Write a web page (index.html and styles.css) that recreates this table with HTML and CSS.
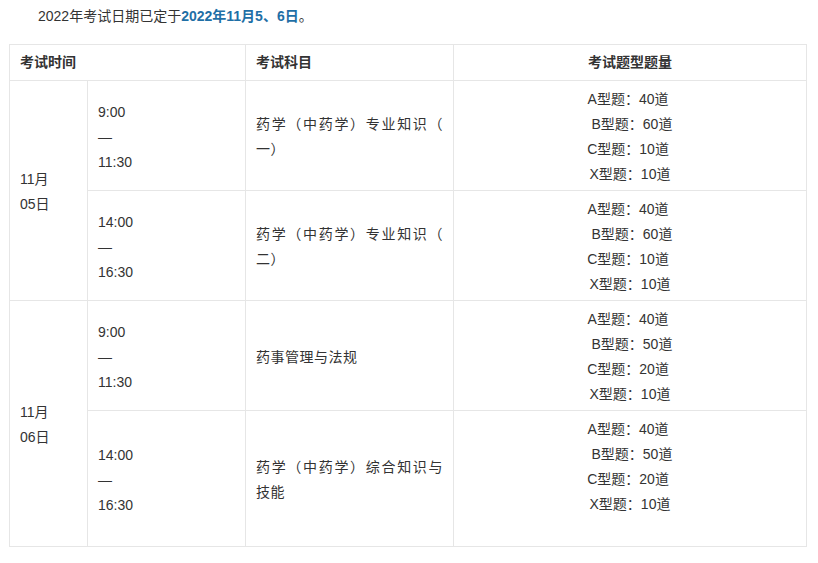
FILE: index.html
```html
<!DOCTYPE html>
<html lang="zh-CN">
<head>
<meta charset="utf-8">
<title>考试日期</title>
<link rel="stylesheet" href="styles.css">
</head>
<body>
<p class="intro">2022年考试日期已定于<strong class="hl">2022年11月5、6日</strong>。</p>
<table class="exam">
  <colgroup>
    <col class="c-date">
    <col class="c-time">
    <col class="c-subj">
    <col class="c-num">
  </colgroup>
  <thead>
    <tr>
      <th colspan="2">考试时间</th>
      <th>考试科目</th>
      <th class="center">考试题型题量</th>
    </tr>
  </thead>
  <tbody>
    <tr>
      <td rowspan="2">11月<br>05日</td>
      <td>9:00<br>—<br>11:30</td>
      <td class="subj">药学（中药学）专业知识（一）</td>
      <td class="center">A型题：40道&nbsp;<br>&nbsp;B型题：60道<br>C型题：10道&nbsp;<br>X型题：10道</td>
    </tr>
    <tr>
      <td>14:00<br>—<br>16:30</td>
      <td class="subj">药学（中药学）专业知识（二）</td>
      <td class="center">A型题：40道&nbsp;<br>&nbsp;B型题：60道<br>C型题：10道&nbsp;<br>X型题：10道</td>
    </tr>
    <tr>
      <td rowspan="2">11月<br>06日</td>
      <td>9:00<br>—<br>11:30</td>
      <td class="subj">药事管理与法规</td>
      <td class="center">A型题：40道&nbsp;<br>&nbsp;B型题：50道<br>C型题：20道&nbsp;<br>X型题：10道</td>
    </tr>
    <tr>
      <td>14:00<br>—<br>16:30</td>
      <td class="subj">药学（中药学）综合知识与技能</td>
      <td class="center tall">A型题：40道&nbsp;<br>&nbsp;B型题：50道<br>C型题：20道&nbsp;<br>X型题：10道</td>
    </tr>
  </tbody>
</table>
</body>
</html>
```

FILE: styles.css
```css
html, body {
  margin: 0;
  padding: 0;
  background: #ffffff;
}

body {
  font-family: "Liberation Sans", "Noto Sans CJK SC", sans-serif;
  font-size: 14px;
  line-height: 25px;
  color: #333333;
}

.intro {
  margin: 4px 0 15px 10px;
  text-indent: 28px;
}

.hl {
  color: #1f6fa6;
  font-weight: bold;
}

.exam {
  margin-left: 9px;
  width: 797px;
  table-layout: fixed;
  border-collapse: collapse;
  border: 1px solid #e2e2e2;
}

.c-date { width: 78px; }
.c-time { width: 158px; }
.c-subj { width: 208px; }
.c-num { width: 353px; }

.exam th,
.exam td {
  border: 1px solid #e6e6e6;
  text-align: left;
  vertical-align: middle;
}

.exam th {
  padding: 5px 10px;
  font-weight: bold;
}

.exam td {
  padding: 6px 10px 3px;
}

.exam .center {
  text-align: center;
}

.exam .subj {
  text-align: justify;
  letter-spacing: 0.5px;
  line-break: anywhere;
}

.exam .tall {
  padding-bottom: 29px;
}
```
